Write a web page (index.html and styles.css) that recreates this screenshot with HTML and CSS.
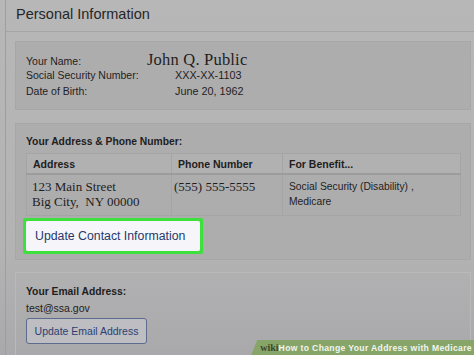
FILE: index.html
```html
<!DOCTYPE html>
<html lang="en">
<head>
    <meta charset="UTF-8">
    <title>Personal Information</title>
    <link rel="stylesheet" href="styles.css">
</head>
<body>
    <div class="page">
        <div class="panel">
            <div class="head">Personal Information</div>
            <div class="content">
                <div class="box info">
                    <div class="row"><span class="lbl">Your Name:</span><span class="name">John Q. Public</span></div>
                    <div class="row"><span class="lbl">Social Security Number:</span><span class="val">XXX-XX-1103</span></div>
                    <div class="row"><span class="lbl">Date of Birth:</span><span class="val">June 20, 1962</span></div>
                </div>
                <div class="box addr">
                    <div class="cap">Your Address &amp; Phone Number:</div>
                    <table class="tbl">
                        <tr>
                            <th class="c1">Address</th>
                            <th class="c2">Phone Number</th>
                            <th class="c3">For Benefit...</th>
                        </tr>
                        <tr>
                            <td class="serif">123 Main Street<br>Big City,&nbsp; NY 00000</td>
                            <td class="serif">(555) 555-5555</td>
                            <td>Social Security (Disability) ,<br>Medicare</td>
                        </tr>
                    </table>
                    <div class="hl"><button class="btn-contact">Update Contact Information</button></div>
                </div>
                <div class="box mail">
                    <div class="cap">Your Email Address:</div>
                    <div class="addr-text">test@ssa.gov</div>
                    <button class="btn-mail">Update Email Address</button>
                </div>
            </div>
        </div>
        <div class="wm"><span class="wiki">wiki</span><b>How</b> to Change Your Address with Medicare</div>
    </div>
</body>
</html>
```
FILE: styles.css
```css
body,div,table,tr,td,th,button{
    padding: 0;
    margin: 0;
}
body{
    width: 474px;
    height: 355px;
    overflow: hidden;
    background-color: #b7b7b8;
    font-family: "Liberation Sans", Arial, sans-serif;
    color: #1e1e1e;
}
.page{
    position: relative;
    height: 355px;
    padding-left: 5px;
    background: linear-gradient(#b7b7b8 0, #b4b3b4 250px, #a9a8aa 355px);
}
.panel{
    height: 355px;
    border-left: 1px solid #9e9e9f;
}
.head{
    height: 31px;
    line-height: 28px;
    padding-left: 10px;
    font-size: 14.5px;
    color: #262626;
    border-bottom: 1px solid #a4a4a5;
}
.content{
    padding: 9px 3px 0 9px;
}
.box{
    border: 1px solid #a7a7a8;
    background-color: #aeadae;
}
.info{
    height: 69px;
    padding: 10px 0 0 10px;
    box-sizing: border-box;
    font-size: 10.5px;
}
.row{
    display: flex;
    align-items: baseline;
    height: 15.5px;
}
.lbl{
    width: 149px;
}
.name{
    margin-left: -28px;
    font-family: "Liberation Serif", "Times New Roman", serif;
    font-size: 16.5px;
    letter-spacing: 0.2px;
    line-height: 15px;
}
.val{
    font-size: 10.8px;
}
.row:first-child{
    height: 17px;
}
.addr{
    margin-top: 13px;
    height: 137px;
    box-sizing: border-box;
    padding: 12px 9px 0 10px;
}
.cap{
    font-size: 10.3px;
    font-weight: bold;
    height: 15px;
}
.tbl{
    width: 100%;
    border-collapse: collapse;
    margin-top: 2px;
    font-size: 10.5px;
}
.tbl th{
    height: 19px;
    text-align: left;
    padding-left: 6px;
    font-weight: bold;
    background-color: #b2b1b2;
    border: 1px solid #a5a5a6;
    border-bottom: 2px solid #9c9c9d;
}
.tbl th.c1{
    width: 138px;
}
.tbl th.c2{
    width: 104px;
}
.tbl td{
    height: 36px;
    vertical-align: top;
    padding: 4px 0 0 6px;
    border: 1px solid #a5a5a6;
    line-height: 15px;
    font-size: 10.3px;
}
.tbl td.serif{
    font-family: "Liberation Serif", "Times New Roman", serif;
    font-size: 13px;
}
.tbl td:first-child{
    padding-left: 5px;
}
.tbl td:nth-child(2){
    padding-left: 2px;
}
.hl{
    display: inline-block;
    margin: 2px 0 0 -3px;
    border: 3px solid #3ee03e;
    border-radius: 2px;
}
.btn-contact{
    display: block;
    width: 174px;
    height: 30px;
    padding-left: 9px;
    text-align: left;
    white-space: nowrap;
    border: none;
    border-radius: 2px;
    background-color: #f6f6fa;
    font-family: "Liberation Sans", Arial, sans-serif;
    font-size: 12.3px;
    color: #27386b;
}
.mail{
    margin-top: 12px;
    height: 90px;
    padding: 13px 0 0 10px;
    box-sizing: border-box;
    border-color: #b9b9ba;
    border-bottom: none;
    background-color: transparent;
}
.addr-text{
    font-size: 10.5px;
    margin-top: 1px;
}
.btn-mail{
    display: block;
    margin: 4px 0 0 0;
    width: 121px;
    height: 26px;
    border: 1px solid #5d6b8c;
    border-radius: 3px;
    background-color: #bdbdc2;
    font-family: "Liberation Sans", Arial, sans-serif;
    font-size: 10.5px;
    color: #2c4170;
    white-space: nowrap;
}
/* wikihow strip lies over the corner */
.wm{
    position: absolute;
    right: 0;
    bottom: 0;
    height: 15px;
    padding: 0 2px 0 9px;
    line-height: 15px;
    font-size: 8.6px;
    font-weight: bold;
    letter-spacing: 0.35px;
    color: #f2f4ee;
    white-space: nowrap;
    background-color: #87a568;
    clip-path: polygon(6px 0, 100% 0, 100% 100%, 0 100%);
}
.wiki{
    font-family: "Liberation Serif", serif;
    color: #3b4a2c;
    font-size: 10px;
    letter-spacing: 0;
}
```
